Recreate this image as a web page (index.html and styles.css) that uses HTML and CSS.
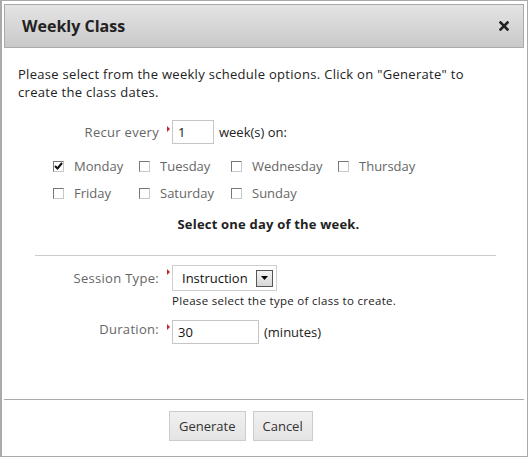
FILE: index.html
```html
<!DOCTYPE html>
<html>
<head>
<meta charset="utf-8">
<link rel="stylesheet" href="styles.css">
</head>
<body>
<div class="dialog">
  <div class="titlebar">
    <span class="title">Weekly Class</span>
    <svg class="close" width="10" height="10" viewBox="0 0 10 10"><path d="M1.5 1.5 L8.5 8.5 M8.5 1.5 L1.5 8.5" stroke="#222" stroke-width="2.6" stroke-linecap="square"/></svg>
  </div>
  <div class="content">
    <p class="intro">Please select from the weekly schedule options. Click on "Generate" to create the class dates.</p>
    <div class="row recur">
      <span class="label">Recur every</span>
      <span class="req"></span>
      <span class="input small">1</span>
      <span class="after">week(s) on:</span>
    </div>
    <div class="days">
      <div class="day"><span class="cb checked"><svg width="9" height="8" viewBox="0 0 9 8"><path d="M1 4 L3.5 6.5 L8 1" stroke="#111" stroke-width="2" fill="none"/></svg></span>Monday</div>
      <div class="day"><span class="cb"></span>Tuesday</div>
      <div class="day"><span class="cb"></span>Wednesday</div>
      <div class="day"><span class="cb"></span>Thursday</div>
      <div class="day"><span class="cb"></span>Friday</div>
      <div class="day"><span class="cb"></span>Saturday</div>
      <div class="day"><span class="cb"></span>Sunday</div>
    </div>
    <p class="msg">Select one day of the week.</p>
    <hr class="sep">
    <div class="row session">
      <span class="label">Session Type:</span>
      <span class="req"></span>
      <div class="fieldcol">
        <span class="select">Instruction<span class="arrowbtn"><svg width="7" height="4" viewBox="0 0 7 4"><path d="M0 0 H7 L3.5 4 Z" fill="#000"/></svg></span></span>
        <span class="hint">Please select the type of class to create.</span>
      </div>
    </div>
    <div class="row duration">
      <span class="label">Duration:</span>
      <span class="req"></span>
      <span class="input wide">30</span>
      <span class="after">(minutes)</span>
    </div>
  </div>
  <div class="footer">
    <span class="btn">Generate</span>
    <span class="btn">Cancel</span>
  </div>
</div>
</body>
</html>
```
FILE: styles.css
```css
html, body { margin: 0; padding: 0; background: #fff; }
body {
  font-family: "Open Sans", "DejaVu Sans", sans-serif;
  font-size: 13px;
  color: #222;
}
.dialog {
  width: 525px;
  height: 455px;
  border: 1px solid #aaa;
  border-left-width: 2px;
  display: flex;
  flex-direction: column;
}
.titlebar {
  margin: 3px 3px 0 2px;
  height: 42px;
  border: 1px solid #aaa;
  background: linear-gradient(#e4e4e4, #c9c9c9);
  display: flex;
  align-items: center;
  justify-content: space-between;
  padding: 0 14px 0 17px;
}
.title {
  font-size: 16px;
  font-weight: bold;
  color: #222;
}
.content {
  padding: 0 0 0 16px;
  flex: 1;
}
.intro {
  margin: 17px 0 0 0;
  line-height: 18px;
  width: 460px;
  letter-spacing: 0.3px;
  color: #222;
}
.row { display: flex; align-items: center; }
.label {
  width: 141px;
  text-align: right;
  color: #666;
  letter-spacing: 0.3px;
}
.req {
  width: 0; height: 0;
  border-top: 3px solid transparent;
  border-bottom: 3px solid transparent;
  border-left: 3px solid #c0282b;
  margin: 0 2px 0 8px;
  align-self: flex-start;
}
.recur { margin-top: 19px; height: 24px; }
.recur .req { margin-top: 6px; }
.input {
  box-sizing: border-box;
  height: 24px;
  border: 1px solid #c6c6c6;
  padding: 0 5px;
  line-height: 22px;
  color: #111;
}
.input.small { width: 42px; }
.input.wide { width: 87px; }
.after { margin-left: 5px; color: #222; }
.days {
  margin: 13px 0 0 35px;
  display: grid;
  grid-template-columns: 86px 92px 107px auto;
  justify-content: start;
  row-gap: 9px;
}
.day {
  display: flex;
  align-items: center;
  color: #666;
  height: 18px;
}
.cb {
  box-sizing: border-box;
  width: 11px; height: 11px;
  border: 1px solid #c8c8c8;
  border-top-color: #777;
  border-left-color: #777;
  margin-right: 10px;
  display: flex;
  align-items: center;
  justify-content: center;
  background: #fff;
}
.msg {
  margin: 13px 0 0 0;
  text-align: center;
  font-weight: bold;
  padding-right: 8px;
  line-height: 18px;
  letter-spacing: 0.2px;
}
.sep {
  margin: 22px 0 0 17px;
  width: 461px;
  border: 0;
  border-top: 1px solid #ccc;
  height: 0;
}
.session { margin-top: 9px; align-items: flex-start; }
.session .label { margin-top: 4px; }
.session .req { margin-top: 4px; }
.fieldcol { display: flex; flex-direction: column; }
.select {
  box-sizing: border-box;
  width: 105px; height: 26px;
  border: 1px solid #cfcfcf;
  display: flex;
  align-items: center;
  justify-content: space-between;
  padding: 0 3px 0 9px;
  color: #111;
}
.arrowbtn {
  box-sizing: border-box;
  width: 17px; height: 17px;
  border: 1px solid #555;
  background: linear-gradient(#f4f4f4, #d6d6d6);
  display: flex;
  align-items: center;
  justify-content: center;
}
.hint { font-size: 11.5px; letter-spacing: 0.3px; margin-top: 2px; color: #222; }
.duration { margin-top: 12px; }
.duration .label { position: relative; top: -3px; }
.duration .req { margin-top: 4px; }
.footer {
  margin: 0 3px 0 2px;
  border-top: 1px solid #aaa;
  height: 57px;
  box-sizing: border-box;
  padding: 11px 0 0 165px;
  display: flex;
  gap: 7px;
  align-items: flex-start;
}
.btn {
  box-sizing: border-box;
  height: 30px;
  padding: 0 9px;
  border: 1px solid #ccc;
  background: linear-gradient(#f0f0f0, #e4e4e4);
  color: #333;
  line-height: 28px;
}
```
